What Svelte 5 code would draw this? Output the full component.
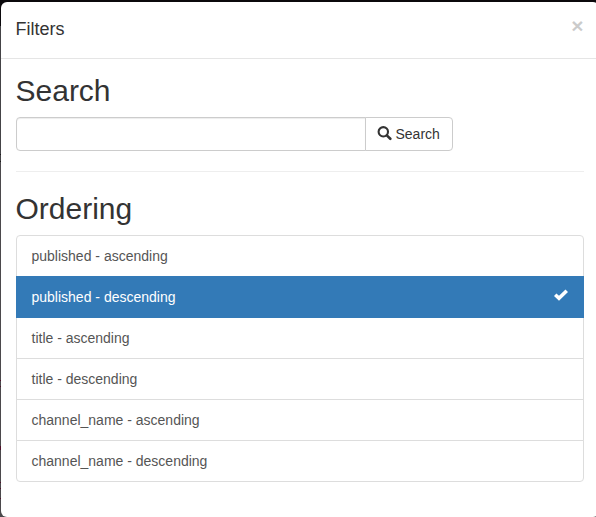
<script>
  const items = [
    'published - ascending',
    'published - descending',
    'title - ascending',
    'title - descending',
    'channel_name - ascending',
    'channel_name - descending'
  ];
  let active = $state(1);
  let query = $state('');
</script>

<div class="page">
  <div class="modal">
    <header>
      <h4>Filters</h4>
      <button class="close" aria-label="Close">×</button>
    </header>
    <div class="body">
      <h2>Search</h2>
      <div class="search">
        <input type="text" bind:value={query} aria-label="Search" />
        <button class="btn">
          <svg width="15" height="15" viewBox="0 0 15 15">
            <circle cx="6.3" cy="5.8" r="4.7" fill="none" stroke="#333" stroke-width="2.1" />
            <path d="M9.8 9.4L13.3 12.8" stroke="#333" stroke-width="2.6" stroke-linecap="round" />
          </svg>
          <span>Search</span>
        </button>
      </div>
      <hr />
      <h2>Ordering</h2>
      <div class="list">
        {#each items as item, i}
          <button class="item" class:active={i === active} onclick={() => (active = i)}>
            <span>{item}</span>
            {#if i === active}
              <svg width="14" height="12" viewBox="0 0 14 12">
                <path d="M0 6.9L2.4 4.5L5 6.8L11.5 0.4L14 2.9L5 11.7Z" fill="#fff" />
              </svg>
            {/if}
          </button>
        {/each}
      </div>
    </div>
  </div>
</div>

<style>
  :global(body) {
    margin: 0;
    overflow: hidden;
  }
  .page {
    box-sizing: border-box;
    width: 596px;
    height: 517px;
    padding: 2px 0 0 0.5px;
    overflow: hidden;
    background: linear-gradient(
      #0b090c 0 26px,
      #444346 26px 154px,
      #1c1b1d 154px 155px,
      #444346 155px 161px,
      #1c1b1d 161px 162px,
      #4b494c 162px 380px,
      #4e1029 380px 381px,
      #4b494c 381px 386px,
      #4e1029 386px 387px,
      #4b494c 387px 446px,
      #4e1029 446px 450px,
      #4b494c 450px 482px,
      #4e1029 482px 483px,
      #4b494c 483px 488px,
      #4e1029 488px 489px,
      #4b494c 489px 498px,
      #4e1029 498px 499px,
      #4b494c 499px
    );
    font: 14px/20px 'Liberation Sans', Arial, sans-serif;
    color: #333;
  }
  .modal {
    box-sizing: border-box;
    width: 598px;
    height: 515px;
    background: #fff;
    border-radius: 6px;
  }
  header {
    box-sizing: border-box;
    display: flex;
    justify-content: space-between;
    height: 57px;
    padding: 15px;
    border-bottom: 1px solid #e5e5e5;
  }
  h4 {
    margin: 0;
    font-size: 18px;
    line-height: 25.7px;
    font-weight: 500;
  }
  .close {
    height: 21px;
    margin-top: -2px;
    padding: 0;
    border: 0;
    background: none;
    font: bold 21px/21px 'Liberation Sans', Arial, sans-serif;
    color: #000;
    opacity: 0.2;
    text-shadow: 0 1px 0 #fff;
  }
  .body {
    padding: 15px;
  }
  h2 {
    margin: 0 0 10px;
    font-size: 30px;
    line-height: 33px;
    font-weight: 500;
  }
  .search {
    display: flex;
    height: 34px;
  }
  input {
    box-sizing: border-box;
    width: 350px;
    height: 34px;
    padding: 6px 12px;
    border: 1px solid #ccc;
    border-radius: 4px 0 0 4px;
    box-shadow: inset 0 1px 1px rgba(0, 0, 0, 0.075);
    font: inherit;
    outline: 0;
  }
  .btn {
    box-sizing: border-box;
    display: flex;
    align-items: center;
    gap: 4px;
    width: 88px;
    height: 34px;
    margin-left: -1px;
    padding: 0 0 0 11px;
    border: 1px solid #ccc;
    border-radius: 0 4px 4px 0;
    background: #fff;
    font: inherit;
    color: #333;
  }
  .btn svg {
    flex: none;
    margin-bottom: 2px;
  }
  hr {
    margin: 20px 0;
    border: 0;
    border-top: 1px solid #eee;
  }
  .list {
    display: flex;
    flex-direction: column;
  }
  .item {
    box-sizing: border-box;
    display: flex;
    justify-content: space-between;
    height: 42px;
    margin: 0 0 -1px;
    padding: 10px 15px;
    border: 1px solid #ddd;
    background: #fff;
    font: inherit;
    color: #555;
  }
  .item svg {
    margin-top: 2px;
  }
  .item:first-child {
    border-radius: 4px 4px 0 0;
  }
  .item:last-child {
    margin-bottom: 0;
    border-radius: 0 0 4px 4px;
  }
  .item.active {
    z-index: 1;
    border-color: #337ab7;
    background: #337ab7;
    color: #fff;
  }
</style>
